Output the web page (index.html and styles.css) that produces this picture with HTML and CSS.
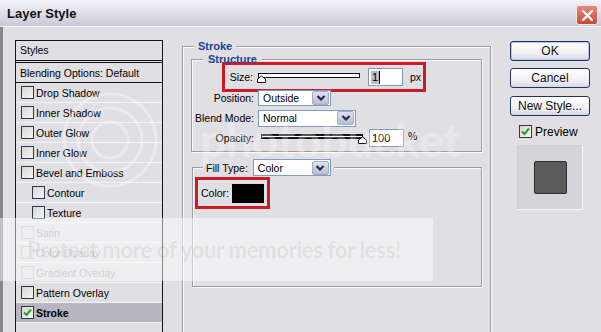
FILE: index.html
```html
<!DOCTYPE html>
<html lang="en">
<head>
    <meta charset="UTF-8">
    <title>Layer Style</title>
    <link rel="stylesheet" href="styles.css">
</head>
<body>
    <div class="window">
        <div class="titlebar">
            <span class="title">Layer Style</span>
            <span class="close">
                <svg width="13" height="13" viewBox="0 0 13 13">
                    <path d="M2 2L11 11M11 2L2 11" stroke="#fff" stroke-width="2.2" stroke-linecap="round"/>
                </svg>
            </span>
        </div>
        <div class="main">
            <div class="styles">
                <div class="styles-head">Styles</div>
                <div class="row blending">Blending Options: Default</div>
                <div class="row"><span class="check"></span>Drop Shadow</div>
                <div class="row"><span class="check"></span>Inner Shadow</div>
                <div class="row"><span class="check"></span>Outer Glow</div>
                <div class="row"><span class="check"></span>Inner Glow</div>
                <div class="row"><span class="check"></span>Bevel and Emboss</div>
                <div class="row sub"><span class="check"></span>Contour</div>
                <div class="row sub"><span class="check"></span>Texture</div>
                <div class="row off"><span class="check"></span>Satin</div>
                <div class="row off"><span class="check"></span>Color Overlay</div>
                <div class="row off"><span class="check"></span>Gradient Overlay</div>
                <div class="row"><span class="check"></span>Pattern Overlay</div>
                <div class="row active"><span class="check"><svg width="11" height="11" viewBox="0 0 11 11"><path d="M2 5.5L4.5 8L9 2.5" fill="none" stroke="#22a322" stroke-width="2"/></svg></span>Stroke</div>
                <div class="row"></div>
            </div>

            <fieldset class="group stroke">
                <legend>Stroke</legend>
                <fieldset class="group structure">
                    <legend>Structure</legend>
                    <div class="mark size-mark">
                        <div class="field">
                            <span class="label short">Size:</span>
                            <svg class="slider" width="104" height="12" viewBox="0 0 104 12">
                                <rect x="1.5" y="2.5" width="101" height="4" fill="#fff" stroke="#111"/>
                                <path d="M0.5 11.5V8L4.5 5L8.5 8V11.5Z" fill="#fff" stroke="#111"/>
                            </svg>
                            <span class="num first"><span class="sel">1</span></span>
                            <span class="unit">px</span>
                        </div>
                    </div>
                    <div class="field position">
                        <span class="label">Position:</span>
                        <span class="select pos-select">Outside<span class="drop"><svg width="14" height="12" viewBox="0 0 14 12"><path d="M3.5 4L7 7.5L10.5 4" fill="none" stroke="#1d2b4d" stroke-width="2.2"/></svg></span></span>
                    </div>
                    <div class="field">
                        <span class="label">Blend Mode:</span>
                        <span class="select blend-select">Normal<span class="drop"><svg width="14" height="12" viewBox="0 0 14 12"><path d="M3.5 4L7 7.5L10.5 4" fill="none" stroke="#1d2b4d" stroke-width="2.2"/></svg></span></span>
                    </div>
                    <div class="field">
                        <span class="label">Opacity:</span>
                        <svg class="slider" width="110" height="12" viewBox="0 0 110 12">
                            <rect x="3.5" y="2.5" width="101" height="4" fill="#1a1a1a" stroke="#111"/>
                            <rect x="4" y="4" width="100" height="1" fill="#fff"/>
                            <path d="M100.5 11.5V8L104.5 5L108.5 8V11.5Z" fill="#fff" stroke="#111"/>
                        </svg>
                        <span class="num"><span>100</span></span>
                        <span class="unit pct">%</span>
                    </div>
                </fieldset>

                <fieldset class="group fill">
                    <legend>
                        <span class="legend-row">
                            <span class="fill-label">Fill Type:</span>
                            <span class="select fill-select">Color<span class="drop"><svg width="14" height="12" viewBox="0 0 14 12"><path d="M3.5 4L7 7.5L10.5 4" fill="none" stroke="#1d2b4d" stroke-width="2.2"/></svg></span></span>
                        </span>
                    </legend>
                    <div class="mark color-mark">
                        <span>Color:</span>
                        <span class="swatch"></span>
                    </div>
                </fieldset>
            </fieldset>

            <div class="actions">
                <div class="btn default">OK</div>
                <div class="btn">Cancel</div>
                <div class="btn">New Style...</div>
                <div class="preview-check">
                    <span class="check"><svg width="11" height="11" viewBox="0 0 11 11"><path d="M2 5.5L4.5 8L9 2.5" fill="none" stroke="#22a322" stroke-width="2"/></svg></span>
                    Preview
                </div>
                <div class="preview">
                    <div class="preview-square"></div>
                </div>
            </div>
        </div>

        <svg class="wm-rings" width="120" height="120" viewBox="0 0 120 120">
            <circle cx="60" cy="60" r="18" fill="none" stroke="#fff" stroke-opacity="0.35" stroke-width="3"/>
            <circle cx="60" cy="60" r="32" fill="none" stroke="#fff" stroke-opacity="0.35" stroke-width="3"/>
            <circle cx="60" cy="60" r="46" fill="none" stroke="#fff" stroke-opacity="0.35" stroke-width="3"/>
        </svg>
        <div class="wm-logo">photobucket</div>
        <div class="wm-band">Protect more of your memories for less!</div>
    </div>
</body>
</html>
```

FILE: styles.css
```css
body {
    margin: 0;
    font-family: "Liberation Sans", Arial, sans-serif;
    background-color: #e0dfe3;
    color: #000;
}
.window {
    position: relative;
    width: 601px;
    height: 332px;
    overflow: hidden;
    background-color: #e0dfe3;
}
.titlebar {
    height: 26px;
    border-bottom: 1px solid #f6f6f8;
    background: linear-gradient(#f4f4f8, #e2e1e9 45%, #c9c8d4);
    display: flex;
    align-items: center;
    padding-left: 7px;
}
.title {
    font-size: 13px;
    font-weight: bold;
    color: #111;
}
.close {
    margin-left: auto;
    margin-right: 3px;
    margin-top: 4px;
    width: 20px;
    height: 18px;
    border: 1px solid #f2e4e4;
    border-radius: 3px;
    background: linear-gradient(#e58a7c, #c9483c);
    display: flex;
    align-items: center;
    justify-content: center;
}
.main {
    display: flex;
    align-items: flex-start;
    height: 305px;
    box-sizing: border-box;
    padding-top: 13px;
    border-left: 3px solid #86868f;
}

/* styles list */
.styles {
    flex-shrink: 0;
    width: 148px;
    margin-left: 12px;
    box-sizing: border-box;
    border: 1px solid #151515;
    font-size: 10.5px;
}
.styles-head {
    height: 19px;
    line-height: 19px;
    padding-left: 4px;
    border-bottom: 3px double #151515;
}
.row {
    height: 19px;
    display: flex;
    align-items: center;
    padding-left: 5px;
    border-bottom: 1px solid #f4f4f6;
}
.row.blending {
    padding-left: 4px;
    border-bottom-color: #151515;
}
.row.sub {
    padding-left: 16px;
}
.row.off {
    color: #a9a8b0;
}
.row.active {
    background-color: #b7b6c1;
    font-weight: bold;
}
.check {
    width: 11px;
    height: 11px;
    margin-right: 2px;
    border: 1px solid #2a3a4c;
    background: linear-gradient(135deg, #d6d6d2, #f6f6f6);
    display: flex;
    flex-shrink: 0;
}
.row.off .check {
    border-color: #c3c3ca;
    background: none;
}

/* group boxes */
.group {
    margin: 0;
    padding: 0;
    border: 1px solid #9d9ca4;
    box-shadow: 1px 1px 0 #fbfbfc, inset 1px 1px 0 #fbfbfc;
    min-width: 0;
}
.group legend {
    font-size: 11px;
    font-weight: bold;
    line-height: 12px;
    color: #1f4394;
    background-color: #e0dfe3;
}
.stroke {
    flex-shrink: 0;
    width: 309px;
    box-sizing: border-box;
    margin-left: 19px;
    padding: 0 8px 60px 8px;
}
.stroke > legend {
    margin-left: 3px;
    padding: 0 4px;
}
.structure {
    margin-top: 1px;
    padding-bottom: 3px;
}
.structure > legend {
    margin-left: 11px;
    padding: 0 5px;
}
.field {
    display: flex;
    align-items: center;
    height: 20px;
    font-size: 10.5px;
}
.label {
    width: 62px;
    text-align: right;
    margin-right: 4px;
    flex-shrink: 0;
}
.label.short {
    width: 28px;
}
.position {
    margin-top: -4px;
}
.mark {
    border: 3px solid #cc1b26;
    box-sizing: border-box;
}
.size-mark {
    margin-top: -3px;
    margin-left: 30px;
    width: 204px;
    height: 30px;
    display: flex;
    align-items: center;
}
.size-mark .field {
    width: 100%;
}
.slider {
    flex-shrink: 0;
}
.num {
    width: 35px;
    height: 18px;
    box-sizing: border-box;
    border: 1px solid #7f9db9;
    background-color: #fff;
    margin-left: 1px;
    padding-left: 2px;
    display: flex;
    align-items: center;
    font-size: 11px;
}
.num.first {
    margin-left: 7px;
}
.sel {
    background-color: #b9bccb;
    border-right: 1px solid #000;
    padding: 0 1px;
    line-height: 13px;
}
.unit {
    margin-left: 7px;
}
.unit.pct {
    margin-left: 4px;
    margin-top: -4px;
}
.select {
    height: 16px;
    box-sizing: border-box;
    border: 1px solid #7f9db9;
    background-color: #fff;
    display: flex;
    align-items: center;
    padding-left: 4px;
    font-size: 10.5px;
    font-weight: normal;
    color: #000;
}
.pos-select {
    width: 73px;
}
.blend-select {
    width: 98px;
    height: 17px;
}
.drop {
    margin-left: auto;
    margin-right: 1px;
    width: 15px;
    height: 12px;
    border: 1px solid #a5acc6;
    border-radius: 2px;
    background: linear-gradient(#dfe3f0, #b8bdd2);
    display: flex;
    align-items: center;
    justify-content: center;
}
.fill {
    margin-top: 7px;
    margin-left: 1px;
    padding-bottom: 77px;
}
.fill > legend {
    margin-left: 10px;
    padding: 0 3px;
}
.legend-row {
    display: flex;
    align-items: center;
    height: 17px;
}
.fill-label {
    font-size: 10.5px;
    font-weight: normal;
    color: #000;
    margin-right: 5px;
}
.fill-select {
    width: 78px;
    height: 17px;
}
.color-mark {
    margin-top: 1px;
    margin-left: 2px;
    width: 75px;
    height: 32px;
    display: flex;
    align-items: center;
    padding-left: 3px;
    font-size: 10.5px;
}
.swatch {
    width: 32px;
    height: 19px;
    margin-left: 3px;
    background-color: #000;
}

/* buttons */
.actions {
    flex-shrink: 0;
    width: 80px;
    margin-left: 19px;
    margin-top: 1px;
    display: flex;
    flex-direction: column;
    font-size: 12px;
}
.btn {
    height: 20px;
    box-sizing: border-box;
    border: 1px solid #21345f;
    border-radius: 3px;
    background: linear-gradient(#ffffff, #f1f1f5 60%, #d6d8e6);
    display: flex;
    align-items: center;
    justify-content: center;
    margin-bottom: 8px;
    color: #111;
}
.btn.default {
    margin-bottom: 7px;
    box-shadow: inset 0 0 0 1px #b6c8ee;
}
.preview-check {
    display: flex;
    align-items: center;
    margin-top: 1px;
    padding-left: 9px;
    height: 13px;
}
.preview-check .check {
    margin-right: 3px;
}
.preview {
    margin-top: 7px;
    margin-left: 7px;
    width: 66px;
    height: 65px;
    box-sizing: border-box;
    border: 1px solid #f7f7f8;
    border-top-color: #cfced4;
    border-left-color: #cfced4;
    background-color: #d5d4d9;
    display: flex;
    align-items: center;
    justify-content: center;
}
.preview-square {
    width: 31px;
    height: 31px;
    border: 1px solid #2d2d2d;
    border-radius: 2px;
    background-color: #5b5b5b;
}

/* photobucket watermark over the screenshot */
.wm-rings {
    position: absolute;
    left: 50px;
    top: 80px;
    pointer-events: none;
}
.wm-logo {
    position: absolute;
    left: 200px;
    top: 112px;
    font-family: Lato, sans-serif;
    font-size: 46px;
    font-weight: bold;
    color: rgba(255, 255, 255, 0.3);
    pointer-events: none;
}
.wm-band {
    position: absolute;
    left: 0;
    top: 218px;
    width: 433px;
    height: 63px;
    box-sizing: border-box;
    padding-left: 27px;
    line-height: 63px;
    background-color: rgba(255, 255, 255, 0.48);
    font-family: Lato, sans-serif;
    font-size: 22px;
    font-weight: bold;
    letter-spacing: -0.3px;
    color: rgba(0, 0, 0, 0.07);
    white-space: nowrap;
    pointer-events: none;
}
```
